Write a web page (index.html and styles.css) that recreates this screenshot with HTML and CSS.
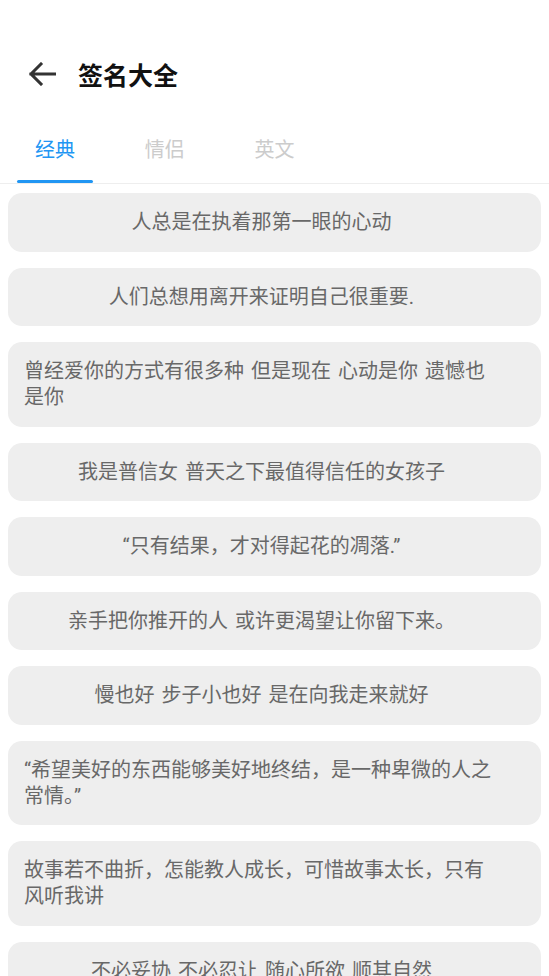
FILE: index.html
```html
<!DOCTYPE html>
<html lang="zh-CN">
<head>
    <meta charset="UTF-8">
    <meta name="viewport" content="width=device-width, initial-scale=1.0">
    <link rel="stylesheet" href="styles.css">
    <title>签名大全</title>
</head>
<body>
    <div class="status"></div>
    <div class="toolbar">
        <svg class="toolbar-back" width="28" height="24" viewBox="0 0 28 24">
            <path d="M26.5 12H3M13 2L3 12l10 10" fill="none" stroke="#333" stroke-width="3" stroke-linecap="square"/>
        </svg>
        <span class="toolbar-title">签名大全</span>
    </div>
    <div class="tabs">
        <div class="tab active">经典</div>
        <div class="tab">情侣</div>
        <div class="tab">英文</div>
    </div>
    <div class="list">
        <div class="card"><span>人总是在执着那第一眼的心动</span></div>
        <div class="card"><span>人们总想用离开来证明自己很重要.</span></div>
        <div class="card"><span>曾经爱你的方式有很多种 但是现在 心动是你 遗憾也是你</span></div>
        <div class="card"><span>我是普信女 普天之下最值得信任的女孩子</span></div>
        <div class="card"><span>“只有结果，才对得起花的凋落.”</span></div>
        <div class="card"><span>亲手把你推开的人 或许更渴望让你留下来。</span></div>
        <div class="card"><span>慢也好 步子小也好 是在向我走来就好</span></div>
        <div class="card"><span>“希望美好的东西能够美好地终结，是一种卑微的人之常情。”</span></div>
        <div class="card"><span>故事若不曲折，怎能教人成长，可惜故事太长，只有风听我讲</span></div>
        <div class="card"><span>不必妥协 不必忍让 随心所欲 顺其自然</span></div>
    </div>
</body>
</html>
```

FILE: styles.css
```css
html,body {
  margin: 0;
  padding: 0;
}
body {
  background-color: #ffffff;
  font-family: Roboto, "Noto Sans CJK SC", sans-serif;
  overflow: hidden;
}
.status {
  height: 46px;
}
.toolbar {
  height: 56px;
  display: flex;
  align-items: center;
  padding-left: 28px;
}
.toolbar-back {
  display: block;
}
.toolbar-title {
  margin-left: 22px;
  font-size: 25px;
  font-weight: bold;
  color: #111111;
}
.tabs {
  display: flex;
  padding-top: 34px;
  border-bottom: 1px solid #eeeeee;
}
.tab {
  width: 20%;
  display: flex;
  flex-direction: column;
  align-items: center;
  font-size: 20px;
  line-height: 28px;
  color: #cccccc;
}
.tab::after {
  content: '';
  width: 76px;
  height: 3px;
  margin-top: 16px;
  border-radius: 2px;
}
.tab.active {
  color: #2196f3;
}
.tab.active::after {
  background-color: #2196f3;
}
.list {
  display: flex;
  flex-direction: column;
  gap: 16px;
  padding: 9px 8px;
}
/* text box sits centred, long text wraps left-aligned */
.card {
  background-color: #eeeeee;
  border-radius: 14px;
  padding: 16.25px 42px 16.25px 16px;
  text-align: center;
  font-size: 20px;
  line-height: 26px;
  word-spacing: 2px;
  color: #686868;
}
.card span {
  display: inline-block;
  text-align: left;
}
```
